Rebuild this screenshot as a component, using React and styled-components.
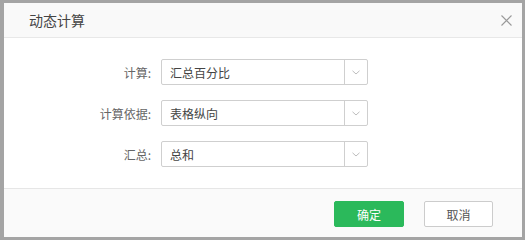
import React from 'react';
import styled, { createGlobalStyle } from 'styled-components';

const GlobalStyle = createGlobalStyle`
  html, body {
    margin: 0;
    padding: 0;
    background: #a4a4a4;
  }
  body {
    font-family: "Noto Sans CJK SC", "Noto Sans", sans-serif;
  }
`;

const Page = styled.div`
  padding: 3px 3px 3px 4px;
  height: 240px;
  box-sizing: border-box;
`;

const Dialog = styled.div`
  width: 518px;
  height: 234px;
  background: #fff;
  display: flex;
  flex-direction: column;
  box-sizing: border-box;
`;

const Header = styled.div`
  height: 35px;
  background: #f9f9f9;
  border-bottom: 1px solid #e8e8e8;
  display: flex;
  align-items: center;
  justify-content: space-between;
  padding: 0 10px 0 0;
  box-sizing: border-box;
`;

const Title = styled.div`
  margin-left: 25px;
  font-size: 14px;
  color: #444;
`;

const Close = styled.button`
  width: 12px;
  height: 12px;
  padding: 0;
  border: none;
  background: none;
  display: flex;
  align-items: center;
  justify-content: center;
`;

const Body = styled.div`
  flex: 1;
  display: flex;
  flex-direction: column;
  gap: 15px;
  padding-top: 21px;
`;

const Row = styled.div`
  display: flex;
  align-items: center;
  height: 26px;
`;

const Label = styled.div`
  width: 147px;
  margin-right: 10px;
  text-align: right;
  font-size: 12px;
  color: #666;
`;

const Select = styled.div`
  width: 207px;
  height: 26px;
  border: 1px solid #cfcfcf;
  border-radius: 2px;
  box-sizing: border-box;
  display: flex;
  align-items: stretch;
`;

const Value = styled.div`
  flex: 1;
  padding-left: 8px;
  display: flex;
  align-items: center;
  font-size: 12px;
  color: #444;
`;

const Arrow = styled.div`
  width: 22px;
  border-left: 1px solid #cfcfcf;
  display: flex;
  align-items: center;
  justify-content: center;
`;

const Footer = styled.div`
  height: 49px;
  background: #fafafa;
  border-top: 1px solid #e6e6e6;
  box-sizing: border-box;
  display: flex;
  justify-content: flex-end;
  align-items: flex-start;
  gap: 20px;
  padding: 12px 29px 0 0;
`;

const Button = styled.button`
  width: ${({ $w }) => $w}px;
  height: 26px;
  border-radius: 2px;
  font-family: inherit;
  font-size: 12px;
  padding: 0;
  cursor: pointer;
  border: 1px solid ${({ $primary }) => ($primary ? '#2bb95b' : '#cccccc')};
  background: ${({ $primary }) => ($primary ? '#2bb95b' : '#fff')};
  color: ${({ $primary }) => ($primary ? '#fff' : '#555')};
`;

const Chevron = () => (
  <svg width="8" height="5" viewBox="0 0 8 5">
    <path d="M0.5 0.8 L4 4 L7.5 0.8" fill="none" stroke="#bdbdbd" strokeWidth="1" />
  </svg>
);

const fields = [
  { label: '计算:', value: '汇总百分比' },
  { label: '计算依据:', value: '表格纵向' },
  { label: '汇总:', value: '总和' },
];

const App = () => (
  <Page>
    <GlobalStyle />
    <Dialog>
      <Header>
        <Title>动态计算</Title>
        <Close>
          <svg width="11" height="11" viewBox="0 0 11 11">
            <path d="M0.5 0.5 L10.5 10.5 M10.5 0.5 L0.5 10.5" stroke="#9a9a9a" strokeWidth="1.1" />
          </svg>
        </Close>
      </Header>
      <Body>
        {fields.map((f) => (
          <Row key={f.label}>
            <Label>{f.label}</Label>
            <Select>
              <Value>{f.value}</Value>
              <Arrow>
                <Chevron />
              </Arrow>
            </Select>
          </Row>
        ))}
      </Body>
      <Footer>
        <Button $primary $w={70}>确定</Button>
        <Button $w={69}>取消</Button>
      </Footer>
    </Dialog>
  </Page>
);

export default App;
